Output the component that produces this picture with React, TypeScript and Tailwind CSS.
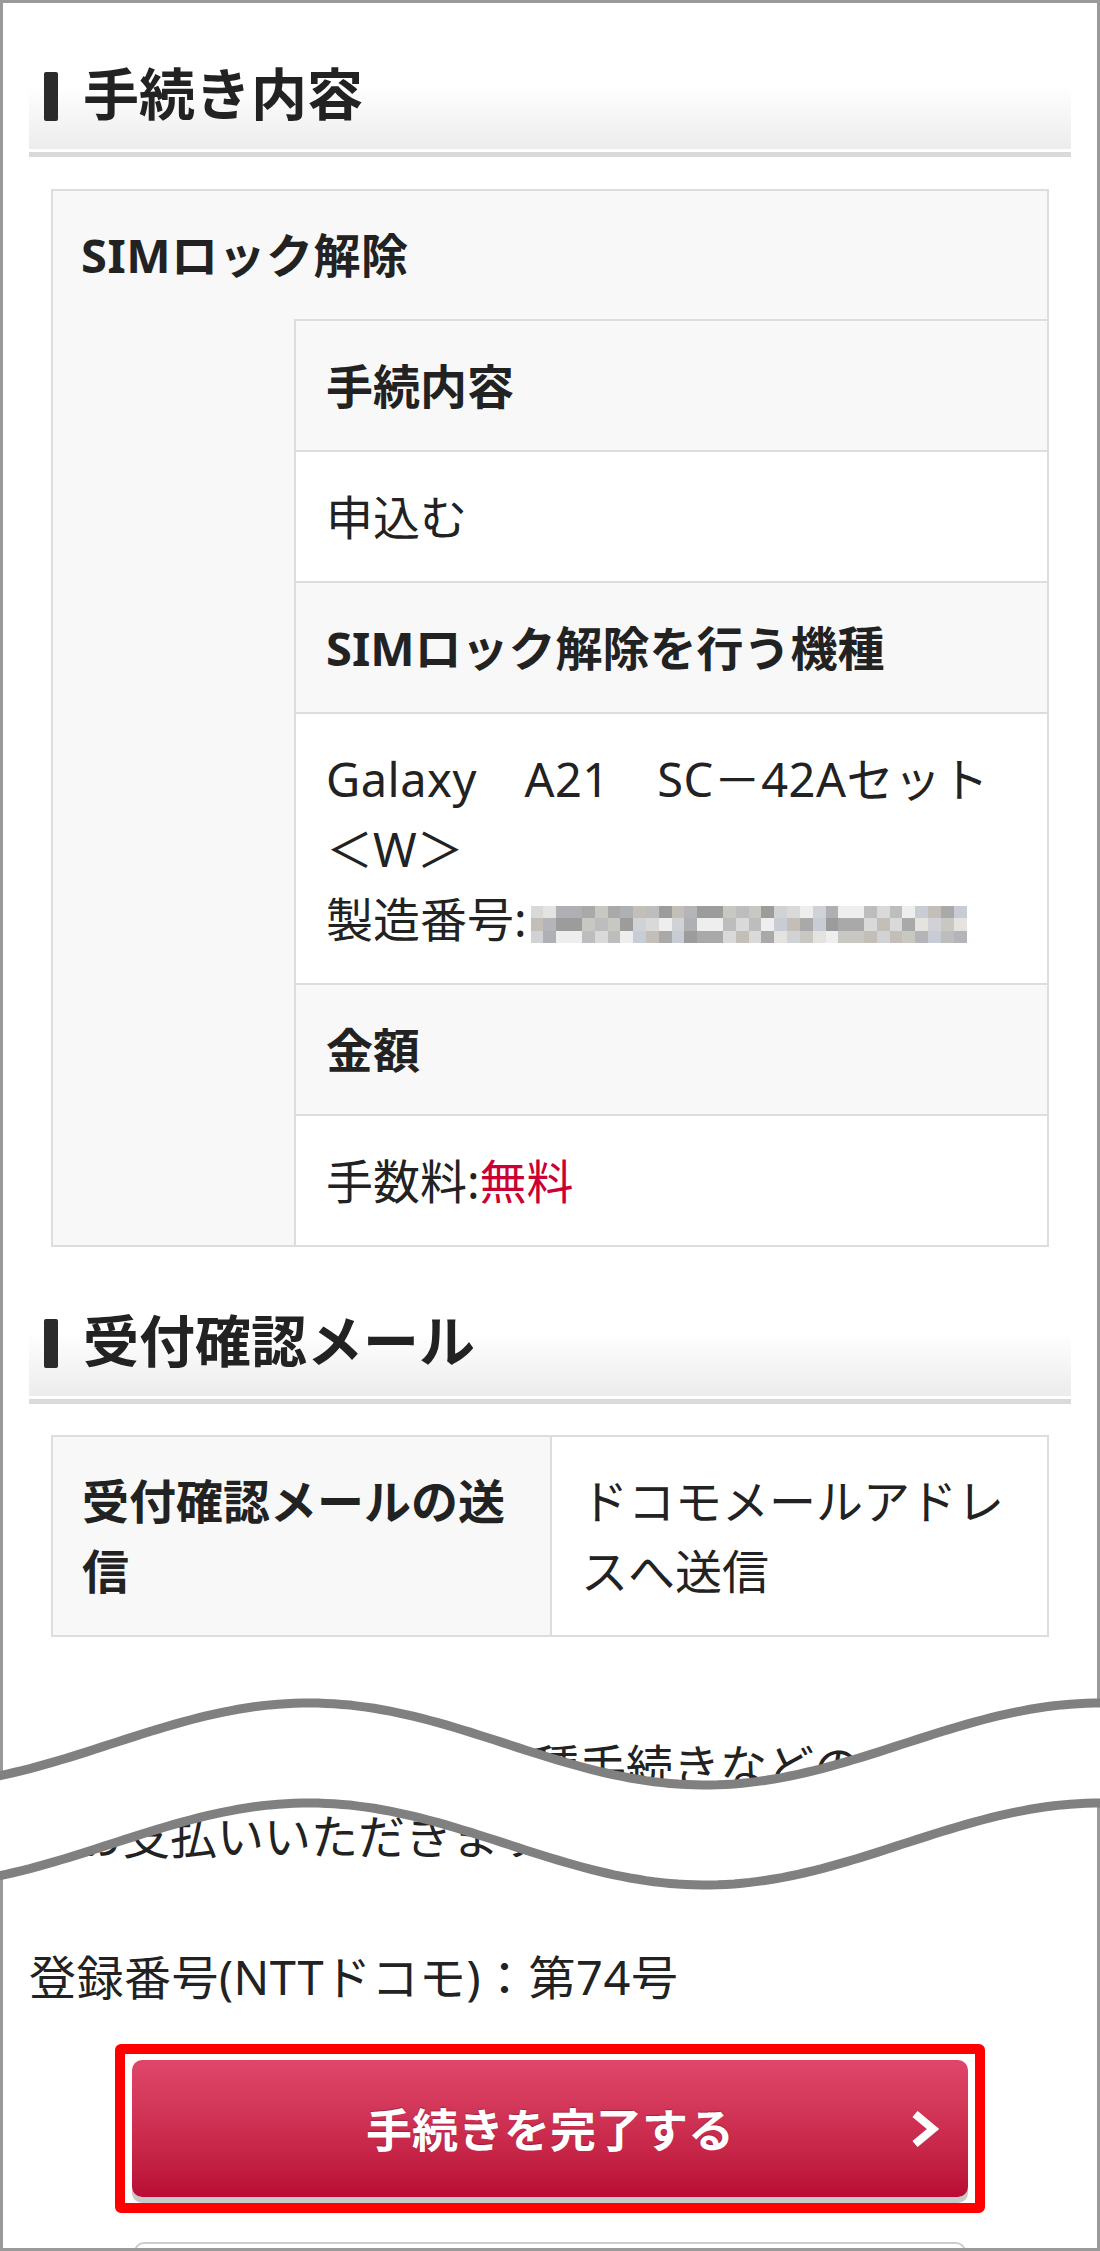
import React from 'react'

const PIXEL_SHADES = [
  '#d9d9d9', '#b3b5b8', '#c9c7c2', '#c8ccd4', '#eeeeee', '#c4beb8',
  '#aeb0b3', '#bdbdbd', '#e5e3e0', '#a9a9a9', '#d0d2d6', '#9c9c9c',
]

// モザイク処理された製造番号
function MaskedSerial() {
  const cells = []
  for (let r = 0; r < 3; r++) {
    for (let c = 0; c < 34; c++) {
      const idx = (c * 7 + r * 5 + ((c * c) % 11)) % PIXEL_SHADES.length
      cells.push(<span key={`${r}-${c}`} style={{ backgroundColor: PIXEL_SHADES[idx] }} />)
    }
  }
  return (
    <span className="ml-[4px] inline-grid h-[37px] w-[436px] grid-cols-[repeat(34,minmax(0,1fr))] grid-rows-3 align-middle">
      {cells}
    </span>
  )
}

function SectionHeading({ title }: { title: string }) {
  return (
    <div>
      <div className="flex h-[106px] items-center bg-linear-to-b from-white from-40% to-[#ececec] pl-[15px]">
        <span className="h-[49px] w-[14px] rounded-[2px] bg-[#2b2b2b]" />
        <h2 className="-mt-[6px] ml-[25px] text-[56px] font-bold leading-none text-[#222222]">{title}</h2>
      </div>
      <div className="mt-[3px] h-[5px] bg-[#dadada]" />
    </div>
  )
}

function Row({ head = false, children }: { head?: boolean; children: React.ReactNode }) {
  return (
    <div
      className={
        head
          ? 'border-t-2 border-[#dddddd] bg-[#f8f8f8] px-[30px] pt-[30px] pb-[29px] font-bold'
          : 'border-t-2 border-[#dddddd] bg-white px-[30px] pt-[30px] pb-[29px]'
      }
    >
      {children}
    </div>
  )
}

// 中略を表す波線
function WaveCut() {
  const top = 1690
  const wave = (x: number, offset: number) => 1744 + offset - 41 * Math.cos((2 * Math.PI * (x - 309)) / 792)
  const xs: number[] = []
  for (let x = -10; x <= 1110; x += 8) xs.push(x)
  const line1 = xs.map((x, i) => `${i === 0 ? 'M' : 'L'}${x} ${wave(x, 0).toFixed(1)}`).join(' ')
  const line2 = xs.map((x, i) => `${i === 0 ? 'M' : 'L'}${x} ${wave(x, 100).toFixed(1)}`).join(' ')
  const back = [...xs].reverse().map((x) => `L${x} ${wave(x, 100).toFixed(1)}`).join(' ')
  return (
    <svg
      className="absolute left-0 top-[1690px]"
      width={1100}
      height={210}
      viewBox={`0 ${top} 1100 210`}
    >
      <path d={`${line1} ${back} Z`} fill="#ffffff" />
      <path d={line1} fill="none" stroke="#808080" strokeWidth={9} />
      <path d={line2} fill="none" stroke="#808080" strokeWidth={9} />
    </svg>
  )
}

export default function App() {
  return (
    <div className="relative h-[2251px] w-[1100px] overflow-hidden bg-white font-['Noto_Sans','Noto_Sans_CJK_JP',sans-serif] text-[47px] leading-[70px] text-[#222222]">
      <div className="h-full overflow-hidden border-[3px] border-[#9a9a9a] px-[26px] pt-[40px]">
        {/* 手続き内容 */}
        <SectionHeading title="手続き内容" />

        <div className="mx-[22px] mt-[32px] border-2 border-[#dddddd] bg-[#f8f8f8]">
          <div className="px-[28px] py-[29px] font-bold tracking-[0.5px]">SIMロック解除</div>
          <div className="ml-[241px] border-l-2 border-[#dddddd]">
            <Row head>手続内容</Row>
            <Row>申込む</Row>
            <Row head>SIMロック解除を行う機種</Row>
            <Row>
              <span className="tracking-[0.5px]">Galaxy　A21　SC－42Aセット</span>
              <br />
              ＜W＞
              <br />
              製造番号:
              <MaskedSerial />
            </Row>
            <Row head>金額</Row>
            <Row>
              手数料:<span className="text-[#cc0033]">無料</span>
            </Row>
          </div>
        </div>

        {/* 受付確認メール */}
        <div className="mt-[43px]">
          <SectionHeading title="受付確認メール" />
        </div>

        <div className="mx-[22px] mt-[31px] grid grid-cols-2 border-2 border-[#dddddd]">
          <div className="bg-[#f8f8f8] px-[29px] py-[29px] font-bold">受付確認メールの送信</div>
          <div className="border-l-2 border-[#dddddd] bg-white px-[29px] py-[29px]">ドコモメールアドレスへ送信</div>
        </div>

        <div className="mt-[94px]">
          <p className="pl-[456px] whitespace-nowrap">各種手続きなどの</p>
          <p className="whitespace-nowrap">をお支払いいただきます。</p>
        </div>

        <p className="mt-[71px] tracking-[0.5px]">登録番号(NTTドコモ)：第74号</p>

        {/* 手続きを完了するボタン（赤枠で強調） */}
        <div className="mx-auto mt-[32px] w-[870px] rounded-[6px] border-[10px] border-[#ff0000] px-[7px] pt-[6px] pb-[6px]">
          <button className="relative flex h-[137px] w-full items-center justify-center rounded-[10px] bg-linear-to-b from-[#e0466b] to-[#b90b35] text-[46px] font-bold text-white shadow-[0_6px_0_#c9c9c9] [text-shadow:0_-1px_1px_rgba(0,0,0,0.25)]">
            手続きを完了する
            <svg className="absolute right-[28px] top-1/2 -translate-y-1/2" width="32" height="36" viewBox="0 0 32 36">
              <polyline points="7,3 25,18 7,33" fill="none" stroke="#ffffff" strokeWidth="8" />
            </svg>
          </button>
        </div>

        <div className="mx-auto mt-[29px] h-[130px] w-[832px] rounded-[10px] border-2 border-[#cccccc] bg-linear-to-b from-white to-[#eeeeee]" />
      </div>

      <WaveCut />
    </div>
  )
}
